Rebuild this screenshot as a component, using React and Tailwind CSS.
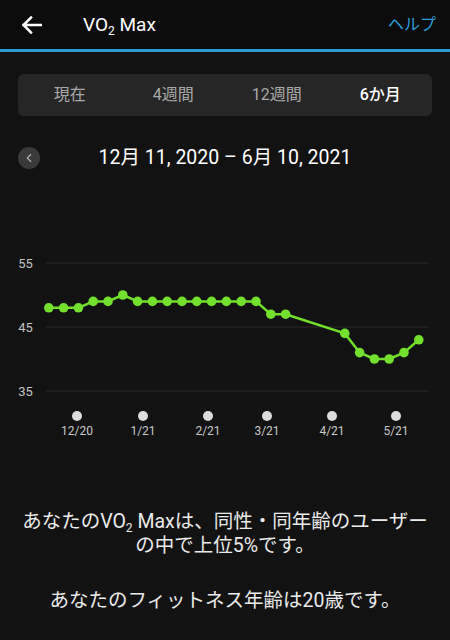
import { ChevronLeft } from "lucide-react";

const values = [48, 48, 48, 49, 49, 50, 49, 49, 49, 49, 49, 49, 49, 49, 49, 47, 47, null, null, null, 44, 41, 40, 40, 41, 43];
const ticks = [
  { x: 77, label: "12/20" },
  { x: 143, label: "1/21" },
  { x: 208, label: "2/21" },
  { x: 267, label: "3/21" },
  { x: 332, label: "4/21" },
  { x: 396, label: "5/21" },
];

const px = (i) => 48.8 + i * 14.8;
const py = (v) => 327 - (v - 45) * 6.4;

const Chart = () => {
  const pts = values
    .map((v, i) => (v == null ? null : [px(i), py(v)]))
    .filter(Boolean);
  const line = pts.map((p) => p.join(",")).join(" ");

  return (
    <svg width="450" height="210" viewBox="0 240 450 210" className="block">
      {[55, 45, 35].map((v) => (
        <g key={v}>
          <line x1="45" x2="428" y1={py(v)} y2={py(v)} stroke="#2a2a2a" strokeWidth="1" />
          <text x="25.5" y={py(v) + 4.5} fill="#c4c4c4" fontSize="13" textAnchor="middle" fontFamily="Roboto, sans-serif">
            {v}
          </text>
        </g>
      ))}
      <polyline points={line} fill="none" stroke="#72e02c" strokeWidth="2.5" strokeLinejoin="round" />
      {pts.map(([x, y], i) => (
        <circle key={i} cx={x} cy={y} r="4.8" fill="#72e02c" />
      ))}
      {ticks.map((t) => (
        <g key={t.label}>
          <circle cx={t.x} cy="416" r="5" fill="#dcdcdc" />
          <text x={t.x} y="435" fill="#c8c8c8" fontSize="12" textAnchor="middle" fontFamily="Roboto, sans-serif">
            {t.label}
          </text>
        </g>
      ))}
    </svg>
  );
};

const App = () => {
  const tabs = ["現在", "4週間", "12週間", "6か月"];

  return (
    <div
      className="w-[450px] h-[640px] overflow-hidden bg-[#121212] text-white"
      style={{ fontFamily: 'Roboto, "Noto Sans CJK JP", sans-serif' }}
    >
      {/* header */}
      <div className="h-[49px] bg-[#0c0c0c] flex items-center">
        <svg width="20" height="18" viewBox="0 0 20 18" className="ml-[22px]">
          <path d="M1.5 9H19M9 1.5 1.5 9 9 16.5" fill="none" stroke="#fff" strokeWidth="2.5" strokeLinecap="square" />
        </svg>
        <div className="ml-[41px] text-[19px] leading-none text-white">
          VO<span className="text-[12px] relative top-[4px]">2</span> Max
        </div>
        <div className="ml-auto mr-[14px] text-[16px] text-[#2b9fd8]">ヘルプ</div>
      </div>
      <div className="h-[3px] bg-[#2a9bd4]" />

      {/* tabs */}
      <div className="mt-[22px] mx-[18px] h-[42px] rounded-md bg-[#262626] grid grid-cols-4 items-center text-[16px]">
        {tabs.map((t, i) => (
          <div
            key={t}
            className={i === 3 ? "text-center text-white font-medium" : "text-center text-[#a9a9a9]"}
          >
            {t}
          </div>
        ))}
      </div>

      {/* date range */}
      <div className="relative mt-[30px] h-[24px] flex items-center justify-center">
        <div className="absolute left-[18px] top-[1px] w-[22px] h-[22px] rounded-full bg-[#3a3a3a] flex items-center justify-center">
          <ChevronLeft size={14} color="#b0b0b0" strokeWidth={2} />
        </div>
        <div className="text-[19.5px] text-white">12月 11, 2020 – 6月 10, 2021</div>
      </div>

      {/* chart */}
      <div className="mt-[70px]">
        <Chart />
      </div>

      {/* summary */}
      <div className="mt-[61px] px-[6px] text-center text-[19.5px] leading-[22px] text-[#ebebeb]">
        <p>
          あなたのVO<span className="text-[12px] relative top-[4px]">2</span> Maxは、同性・同年齢のユーザー
          <br />
          の中で上位5%です。
        </p>
        <p className="mt-[33px]">あなたのフィットネス年齢は20歳です。</p>
      </div>
    </div>
  );
};

export default App;
